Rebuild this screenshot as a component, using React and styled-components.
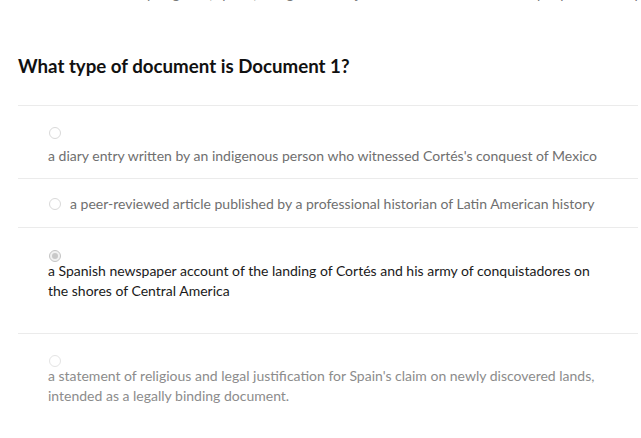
import React from 'react';
import styled, { createGlobalStyle, css } from 'styled-components';

const GlobalStyle = createGlobalStyle`
  html, body {
    margin: 0;
    padding: 0;
    background: #ffffff;
  }
  body {
    font-family: Lato, 'Open Sans', sans-serif;
    overflow: hidden;
  }
`;

const Page = styled.div`
  padding: 0 3px 0 18px;
  height: 438px;
  overflow: hidden;
`;

const Passage = styled.p`
  margin: -16px 0 0 20px;
  font-size: 14px;
  line-height: 20px;
  color: #777;
  white-space: nowrap;
`;

const Question = styled.h2`
  margin: 51px 0 0;
  font-size: 18.7px;
  font-weight: 700;
  line-height: 22px;
  color: #111;
  padding-bottom: 28px;
  border-bottom: 1px solid #ebebeb;
`;

const OptionList = styled.div`
  display: flex;
  flex-direction: column;
`;

const Option = styled.label`
  display: block;
  padding: ${({ $pad }) => $pad};
  padding-left: 30px;
  border-bottom: 1px solid #ebebeb;
  font-size: 14px;
  line-height: 20px;
  color: ${({ $tone }) =>
    $tone === 'selected' ? '#1a1a1a' : $tone === 'disabled' ? '#8c8c8c' : '#6f6f6f'};
`;

const RadioLine = styled.div`
  display: ${({ $inline }) => ($inline ? 'flex' : 'block')};
  align-items: center;
  gap: 9px;
  ${({ $inline }) =>
    !$inline &&
    css`
      height: ${({ $gap }) => $gap}px;
    `}
`;

const Radio = styled.span`
  display: inline-block;
  box-sizing: border-box;
  width: 12px;
  height: 12px;
  margin-left: 1px;
  border-radius: 50%;
  border: 1px solid ${({ $faint }) => ($faint ? '#e4e4e4' : '#d9d9d9')};
  background: #fff;
  position: relative;
  flex-shrink: 0;

  ${({ $checked }) =>
    $checked &&
    css`
      border-color: #c4c4c4;
      background: #f1f1f1;
      &::after {
        content: '';
        position: absolute;
        left: 2px;
        top: 2px;
        width: 6px;
        height: 6px;
        border-radius: 50%;
        background: #c8c8c8;
      }
    `}
`;

const OptionText = styled.div`
  padding-right: 30px;
`;

const options = [
  {
    text: 'a diary entry written by an indigenous person who witnessed Cortés\'s conquest of Mexico',
    pad: '18px 0 12px',
    gap: 22,
  },
  {
    text: 'a peer-reviewed article published by a professional historian of Latin American history',
    pad: '15px 0 13px',
    inline: true,
  },
  {
    text: 'a Spanish newspaper account of the landing of Cortés and his army of conquistadores on the shores of Central America',
    pad: '19px 0 32px',
    gap: 14,
    tone: 'selected',
    checked: true,
  },
  {
    text: 'a statement of religious and legal justification for Spain\'s claim on newly discovered lands, intended as a legally binding document.',
    pad: '18px 0 40px',
    gap: 14,
    tone: 'disabled',
    faint: true,
  },
];

export default function App() {
  return (
    <Page>
      <GlobalStyle />
      <Passage>
        them with an array of goods, spices, and gold. In his journal Cortés wrote that the people in the capital city were
      </Passage>
      <Question>What type of document is Document 1?</Question>
      <OptionList>
        {options.map((o) => (
          <Option key={o.text} $pad={o.pad} $tone={o.tone}>
            {o.inline ? (
              <RadioLine $inline>
                <Radio $checked={o.checked} $faint={o.faint} />
                <span>{o.text}</span>
              </RadioLine>
            ) : (
              <>
                <RadioLine $gap={o.gap}>
                  <Radio $checked={o.checked} $faint={o.faint} />
                </RadioLine>
                <OptionText>{o.text}</OptionText>
              </>
            )}
          </Option>
        ))}
      </OptionList>
    </Page>
  );
}
